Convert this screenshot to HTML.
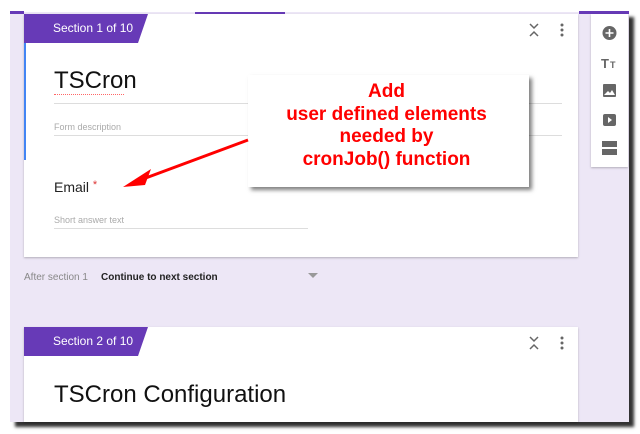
<!DOCTYPE html>
<html><head><style>
*{margin:0;padding:0;box-sizing:border-box}
body{width:640px;height:434px;background:#fff;position:relative;overflow:hidden;font-family:"Liberation Sans",sans-serif}
.abs{position:absolute}
.bg{left:10px;top:12px;width:619px;height:410px;background:#ede7f6;box-shadow:5px 5px 3px #333}
.card{background:#fff;box-shadow:0 1px 2px rgba(0,0,0,.25)}
.tab{background:#673ab7;color:#fff;font-size:12px;height:29px;line-height:29px;padding-left:29px;clip-path:polygon(0 0,124px 0,114px 29px,0 29px);width:124px}
.red{color:#f00;font-weight:bold;font-size:19px;text-align:center;line-height:22.5px}
.grey{color:#aaa;font-size:9px}
.line{height:1px;background:#ddd}
</style></head><body>
<div class="abs bg"></div>
<div class="abs" style="left:10px;top:11px;width:14px;height:3px;background:#673ab7"></div>
<div class="abs" style="left:195px;top:12px;width:90px;height:2px;background:#673ab7"></div>
<div class="abs card" style="left:24px;top:14px;width:554px;height:243px"></div>
<div class="abs tab" style="left:24px;top:14px">Section 1 of 10</div>
<div class="abs" style="left:24px;top:43px;width:2px;height:117px;background:#4285f4"></div>
<div class="abs" style="left:54px;top:67px;font-size:24px;color:#111">TSCron</div>
<div class="abs" style="left:54px;top:94px;width:70px;border-bottom:1px dotted #f66"></div>
<div class="abs line" style="left:54px;top:103px;width:508px"></div>
<div class="abs grey" style="left:54px;top:122px">Form description</div>
<div class="abs line" style="left:54px;top:135px;width:508px"></div>
<div class="abs" style="left:54px;top:179px;font-size:14px;color:#222">Email <span style="color:#d33;font-size:11px;vertical-align:top">*</span></div>
<div class="abs grey" style="left:54px;top:215px">Short answer text</div>
<div class="abs line" style="left:54px;top:228px;width:254px"></div>
<svg class="abs" style="left:527px;top:22px" width="14" height="16"><path d="M3 2l4 4 4-4M3 14l4-4 4 4" stroke="#666" stroke-width="1.5" fill="none"/></svg>
<svg class="abs" style="left:558px;top:22px" width="8" height="16"><circle cx="4" cy="3" r="1.5" fill="#666"/><circle cx="4" cy="8" r="1.5" fill="#666"/><circle cx="4" cy="13" r="1.5" fill="#666"/></svg>
<div class="abs" style="left:248px;top:75px;width:281px;height:112px;background:#fff;box-shadow:3px 3px 4px rgba(0,0,0,.5)"></div>
<div class="abs red" style="left:246px;top:81px;width:281px">Add<br>user defined elements<br>needed by<br>cronJob() function</div>
<svg class="abs" style="left:115px;top:135px" width="140" height="60"><path d="M133 5L28 44" stroke="#f00" stroke-width="3"/><path d="M8 52L36 34 30 50z" fill="#f00"/></svg>
<div class="abs" style="left:579px;top:11px;width:50px;height:3px;background:#673ab7"></div>
<div class="abs card" style="left:591px;top:14px;width:37px;height:153px"></div>
<svg class="abs" style="left:591px;top:14px" width="37" height="153">
<circle cx="18.5" cy="19" r="7" fill="#666"/><path d="M18.5 15v8M14.5 19h8" stroke="#fff" stroke-width="1.6"/>
<text x="10" y="54" font-family="Liberation Sans" font-weight="bold" font-size="13" fill="#666">T</text><text x="19" y="54" font-family="Liberation Sans" font-weight="bold" font-size="9" fill="#666">T</text>
<rect x="12" y="70" width="13" height="13" rx="1" fill="#666"/><path d="M13 81l4-4 2 2 2-3 3 5z" fill="#fff"/>
<rect x="12" y="100" width="13" height="12" rx="2" fill="#666"/><path d="M17 103v6l4-3z" fill="#fff"/>
<rect x="11" y="127" width="15" height="6" fill="#666"/><rect x="11" y="135" width="15" height="6" fill="#666"/>
</svg>
<div class="abs" style="left:24px;top:272px;font-size:10px;color:#888">After section 1</div>
<div class="abs" style="left:101px;top:272px;font-size:10px;color:#222;font-weight:bold">Continue to next section</div>
<svg class="abs" style="left:308px;top:273px" width="10" height="6"><path d="M0 0h10L5 5z" fill="#999"/></svg>
<div class="abs card" style="left:24px;top:327px;width:554px;height:95px"></div>
<div class="abs tab" style="left:24px;top:327px">Section 2 of 10</div>
<svg class="abs" style="left:527px;top:335px" width="14" height="16"><path d="M3 2l4 4 4-4M3 14l4-4 4 4" stroke="#666" stroke-width="1.5" fill="none"/></svg>
<svg class="abs" style="left:558px;top:335px" width="8" height="16"><circle cx="4" cy="3" r="1.5" fill="#666"/><circle cx="4" cy="8" r="1.5" fill="#666"/><circle cx="4" cy="13" r="1.5" fill="#666"/></svg>
<div class="abs" style="left:54px;top:381px;font-size:24px;color:#111">TSCron Configuration</div>
</body></html>
